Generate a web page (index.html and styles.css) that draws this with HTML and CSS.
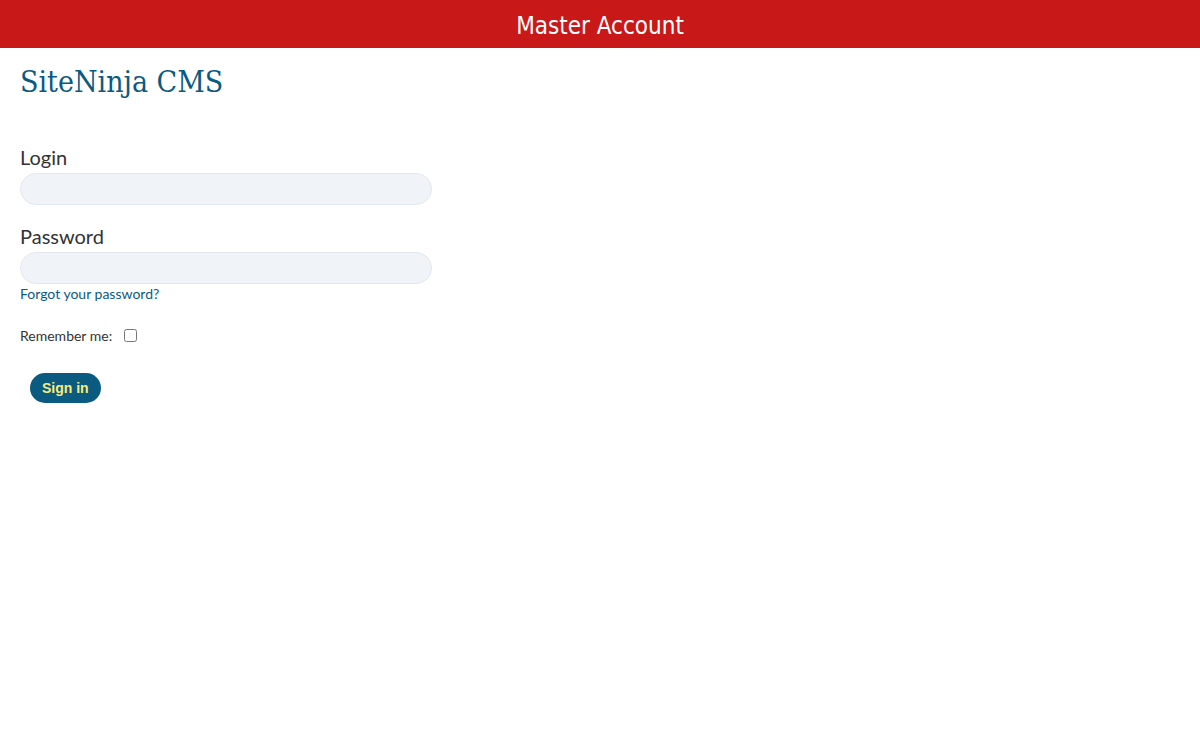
FILE: index.html
```html
<!DOCTYPE html>
<html lang="en">
<head>
    <meta charset="UTF-8">
    <meta name="viewport" content="width=device-width, initial-scale=1.0">
    <title>SiteNinja CMS - Master Account</title>
    <link rel="stylesheet" href="styles.css">
</head>
<body>

<!-- Top bar -->
<div class="topbar">Master Account</div>

<div class="content">
    <h1 class="site-title">SiteNinja CMS</h1>

    <form class="login-form" action="#" method="POST">
        <div class="form-group">
            <label for="login">Login</label>
            <input type="text" id="login" name="login">
        </div>

        <div class="form-group">
            <label for="password">Password</label>
            <input type="password" id="password" name="password">
            <a href="#" class="forgot-link">Forgot your password?</a>
        </div>

        <div class="remember">
            <label for="remember">Remember me:</label>
            <input type="checkbox" id="remember" name="remember">
        </div>

        <button type="submit" class="signin-button">Sign in</button>
    </form>
</div>

</body>
</html>
```

FILE: styles.css
```css
body {
    margin: 0;
    padding: 0;
    background-color: #fff;
    font-family: Lato, "Open Sans", sans-serif;
    color: #333;
}

.topbar {
    height: 48px;
    line-height: 52px;
    background-color: #c91818;
    color: #fff;
    text-align: center;
    font-family: "DejaVu Sans Condensed", "DejaVu Sans", sans-serif;
    font-size: 24px;
}

.content {
    padding: 0 20px;
}

.site-title {
    margin: 16px 0 0;
    font-family: "DejaVu Serif Condensed", "DejaVu Serif", Georgia, serif;
    font-weight: normal;
    font-size: 30px;
    line-height: 36px;
    color: #0b5a80;
}

.login-form {
    margin-top: 44px;
    width: 412px;
}

.form-group {
    margin-bottom: 18px;
}

.form-group label {
    display: block;
    font-size: 20px;
    line-height: 26px;
    margin-bottom: 3px;
}

.form-group input {
    display: block;
    box-sizing: border-box;
    width: 412px;
    height: 32px;
    margin: 0;
    padding: 4px 14px;
    background-color: #f0f4f8;
    border: 1px solid #e2e8ee;
    border-radius: 16px;
    font-size: 15px;
    outline: none;
}

.forgot-link {
    display: block;
    margin-top: 1px;
    font-size: 14px;
    color: #0b5a80;
    text-decoration: none;
}

.remember {
    display: flex;
    align-items: center;
    margin-top: 25px;
    font-size: 14px;
}

.remember input {
    margin: 0 0 0 12px;
    width: 13px;
    height: 13px;
}

.signin-button {
    margin: 29px 0 0 10px;
    padding: 0 12px;
    height: 30px;
    background-color: #0b5a80;
    color: #f8ec7c;
    border: none;
    border-radius: 15px;
    font-family: "Liberation Sans", Arial, sans-serif;
    font-weight: bold;
    font-size: 14px;
    cursor: pointer;
}
```
